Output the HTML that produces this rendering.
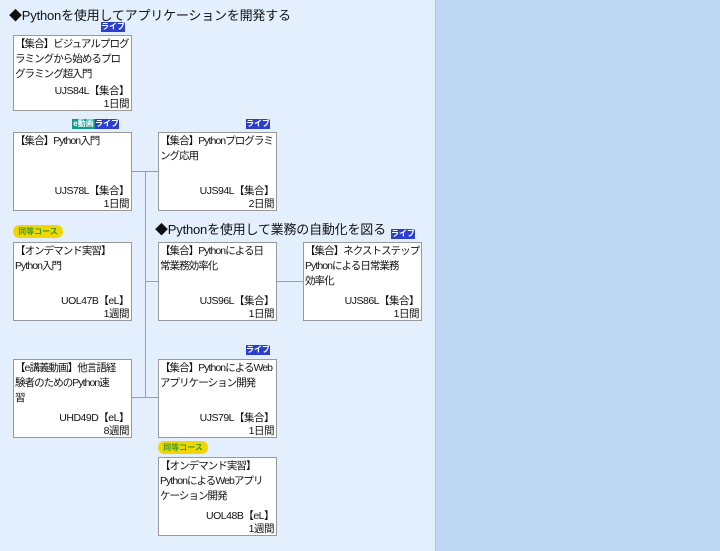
<!DOCTYPE html><html><head><meta charset="utf-8"><style>
body{margin:0;width:720px;height:551px;overflow:hidden;font-family:"Liberation Sans","Noto Sans CJK JP",sans-serif;background:#bdd7f3;position:relative}
#l{position:absolute;left:0;top:0;width:435px;height:551px;background:#e3effd;border-right:1px solid #a9c6e8}
.b{position:absolute;width:117px;height:77px;background:#fff;border:1px solid #999;font-size:10.5px;line-height:15px;color:#111;letter-spacing:-0.95px;white-space:nowrap;overflow:hidden}
.t{padding:1px 0 0 1px}
.c{position:absolute;right:2px;bottom:-1px;text-align:right;line-height:13px;letter-spacing:-0.5px}
.h{position:absolute;font-size:13px;color:#111;white-space:nowrap;letter-spacing:-0.2px}
.lv{position:absolute;background:#2a3fcb;color:#fff;font-size:8px;line-height:10px;height:10px;width:24px;text-align:center;font-weight:bold}
.ev{position:absolute;background:#139a8a;color:#fff;font-size:8px;line-height:10px;height:10px;width:23px;text-align:center;font-weight:bold}
.eq{position:absolute;background:#f2d600;color:#3a9a2a;font-size:8px;line-height:13px;height:13px;width:50px;text-align:center;border-radius:7px;font-weight:bold}
.g{position:absolute;background:#5fbf95}
</style></head><body><div id="l"></div>
<div class="h" style="left:9px;top:5px">◆Pythonを使用してアプリケーションを開発する</div>
<div class="h" style="left:155px;top:219px">◆Pythonを使用して業務の自動化を図る</div>
<div class="g" style="left:145px;top:171px;width:1px;height:227px"></div>
<div class="g" style="left:132px;top:171px;width:26px;height:1px"></div>
<div class="g" style="left:145px;top:281px;width:13px;height:1px"></div>
<div class="g" style="left:277px;top:281px;width:26px;height:1px"></div>
<div class="g" style="left:132px;top:397px;width:26px;height:1px"></div>
<div class="lv" style="left:101px;top:22px">ライブ</div>
<div class="ev" style="left:72px;top:119px">e動画</div><div class="lv" style="left:95px;top:119px">ライブ</div>
<div class="lv" style="left:246px;top:119px">ライブ</div>
<div class="lv" style="left:391px;top:229px">ライブ</div>
<div class="lv" style="left:246px;top:345px">ライブ</div>
<div class="eq" style="left:13px;top:225px">同等コース</div>
<div class="eq" style="left:158px;top:441px">同等コース</div>
<div class="b" style="left:13px;top:35px;height:74px"><div class="t">【集合】ビジュアルプログ<br>ラミングから始めるプロ<br>グラミング超入門</div><div class="c">UJS84L【集合】<br>1日間</div></div>
<div class="b" style="left:13px;top:132px"><div class="t">【集合】Python入門</div><div class="c">UJS78L【集合】<br>1日間</div></div>
<div class="b" style="left:158px;top:132px"><div class="t">【集合】Pythonプログラミ<br>ング応用</div><div class="c">UJS94L【集合】<br>2日間</div></div>
<div class="b" style="left:13px;top:242px"><div class="t">【オンデマンド実習】<br>Python入門</div><div class="c">UOL47B【eL】<br>1週間</div></div>
<div class="b" style="left:158px;top:242px"><div class="t">【集合】Pythonによる日<br>常業務効率化</div><div class="c">UJS96L【集合】<br>1日間</div></div>
<div class="b" style="left:303px;top:242px"><div class="t">【集合】ネクストステップ<br>Pythonによる日常業務<br>効率化</div><div class="c">UJS86L【集合】<br>1日間</div></div>
<div class="b" style="left:13px;top:359px"><div class="t">【e講義動画】他言語経<br>験者のためのPython速<br>習</div><div class="c">UHD49D【eL】<br>8週間</div></div>
<div class="b" style="left:158px;top:359px"><div class="t">【集合】PythonによるWeb<br>アプリケーション開発</div><div class="c">UJS79L【集合】<br>1日間</div></div>
<div class="b" style="left:158px;top:457px"><div class="t">【オンデマンド実習】<br>PythonによるWebアプリ<br>ケーション開発</div><div class="c">UOL48B【eL】<br>1週間</div></div>
</body></html>
